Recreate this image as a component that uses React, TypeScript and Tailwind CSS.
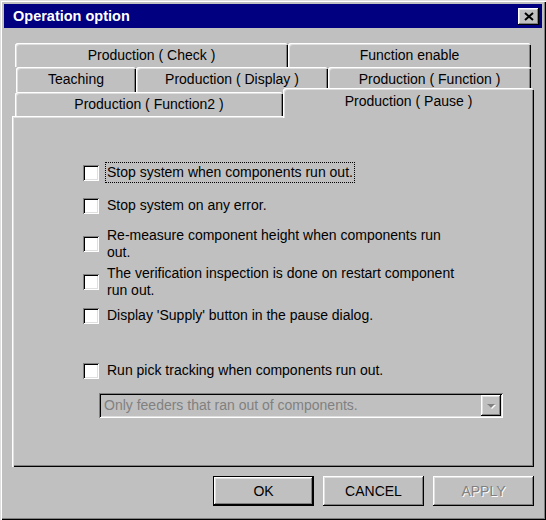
import React from 'react';

const tabCls =
  'flex items-center justify-center bg-[#c0c0c0] rounded-t-[3px] shadow-[inset_1px_1px_#fff,inset_2px_2px_#dfdfdf,inset_-1px_0_#000,inset_-2px_0_#808080]';

function Tab({ label, className }: { label: string; className: string }) {
  return <div className={`${tabCls} ${className}`}>{label}</div>;
}

function Check({ lines, focus = false }: { lines: string[]; focus?: boolean }) {
  return (
    <div className="flex items-center">
      <span className="w-[16px] h-[16px] shrink-0 bg-white shadow-[inset_1px_1px_#808080,inset_-1px_-1px_#fff,inset_2px_2px_#000,inset_-2px_-2px_#dfdfdf]" />
      <span
        className={`ml-[6px] px-[1px] py-[1px] leading-[17px] border border-dotted ${
          focus ? 'border-black' : 'border-transparent'
        }`}
      >
        {lines.map((l, i) => (
          <React.Fragment key={i}>
            {i > 0 && <br />}
            {l}
          </React.Fragment>
        ))}
      </span>
    </div>
  );
}

function Button({ label, isDefault = false, disabled = false }: { label: string; isDefault?: boolean; disabled?: boolean }) {
  return (
    <button
      className={`w-[101px] h-[30px] flex items-center justify-center bg-[#c0c0c0] text-[14px] shadow-[inset_-1px_-1px_#000,inset_1px_1px_#fff,inset_-2px_-2px_#808080,inset_2px_2px_#dfdfdf] ${
        isDefault ? 'border border-black' : ''
      } ${disabled ? 'text-[#808080] [text-shadow:1px_1px_0_#fff]' : 'text-black'}`}
    >
      {label}
    </button>
  );
}

export default function App() {
  return (
    <div className="w-[546px] h-[520px] bg-[#c0c0c0] p-[4px] font-['Liberation_Sans',Arial,sans-serif] text-[14px] text-black shadow-[inset_1px_1px_#dfdfdf,inset_2px_2px_#fff,inset_-1px_-1px_#000,inset_-2px_-2px_#808080]">
      {/* title bar */}
      <div className="h-[24px] bg-[#000080] flex items-center justify-between pl-[9px] pr-[3px]">
        <span className="text-white font-bold text-[14.5px] leading-none">Operation option</span>
        <div className="w-[21px] h-[17px] bg-[#c0c0c0] flex items-center justify-center shadow-[inset_-1px_-1px_#000,inset_1px_1px_#fff,inset_-2px_-2px_#808080,inset_2px_2px_#dfdfdf]">
          <svg width="10" height="9" viewBox="0 0 10 9">
            <path d="M1 1 L9 8 M9 1 L1 8" stroke="#000" strokeWidth="2" />
          </svg>
        </div>
      </div>

      <div className="ml-[8px] w-[522px] mt-[15px]">
        {/* tab rows */}
        <div className="flex h-[24px] pl-[3px]">
          <Tab label="Production ( Check )" className="w-[273px] h-[24px]" />
          <Tab label="Function enable" className="w-[243px] h-[24px]" />
        </div>
        <div className="flex h-[25px] pl-[4px]">
          <Tab label="Teaching" className="w-[120px] h-[25px]" />
          <Tab label="Production ( Display )" className="w-[192px] h-[25px]" />
          <Tab label="Production ( Function )" className="w-[203px] h-[25px]" />
        </div>
        <div className="flex items-end h-[24px] pl-[3px]">
          <Tab label="Production ( Function2 )" className="w-[268px] h-[24px]" />
          <Tab label="Production ( Pause )" className="relative z-10 w-[251px] h-[30px] -mb-[2px] pb-[3px]" />
        </div>

        {/* panel */}
        <div className="h-[351px] pl-[71px] pt-[46px] shadow-[inset_1px_1px_#fff,inset_2px_2px_#dfdfdf,inset_-1px_-1px_#000,inset_-2px_-2px_#808080]">
          <Check lines={['Stop system when components run out.']} focus />
          <div className="mt-[12px]">
            <Check lines={['Stop system on any error.']} />
          </div>
          <div className="mt-[9px]">
            <Check lines={['Re-measure component height when components run', 'out.']} />
          </div>
          <div>
            <Check lines={['The verification inspection is done on restart component', 'run out.']} />
          </div>
          <div className="mt-[4px]">
            <Check lines={["Display 'Supply' button in the pause dialog."]} />
          </div>
          <div className="mt-[34px]">
            <Check lines={['Run pick tracking when components run out.']} />
          </div>

          <div className="mt-[12px] ml-[16px] w-[404px] h-[25px] flex items-center justify-between pl-[5px] pr-[2px] shadow-[inset_1px_1px_#808080,inset_-1px_-1px_#fff,inset_2px_2px_#000,inset_-2px_-2px_#dfdfdf]">
            <span className="text-[#808080]">Only feeders that ran out of components.</span>
            <div className="w-[20px] h-[21px] flex items-center justify-center shadow-[inset_-1px_-1px_#000,inset_1px_1px_#fff,inset_-2px_-2px_#808080,inset_2px_2px_#dfdfdf]">
              <svg width="10" height="6" viewBox="0 0 10 6">
                <polygon points="2,2 10,2 6,6" fill="#fff" />
                <polygon points="1,1 9,1 5,5" fill="#808080" />
              </svg>
            </div>
          </div>
        </div>

        {/* buttons */}
        <div className="flex justify-end gap-[9px] mt-[9px]">
          <Button label="OK" isDefault />
          <Button label="CANCEL" />
          <Button label="APPLY" disabled />
        </div>
      </div>
    </div>
  );
}
